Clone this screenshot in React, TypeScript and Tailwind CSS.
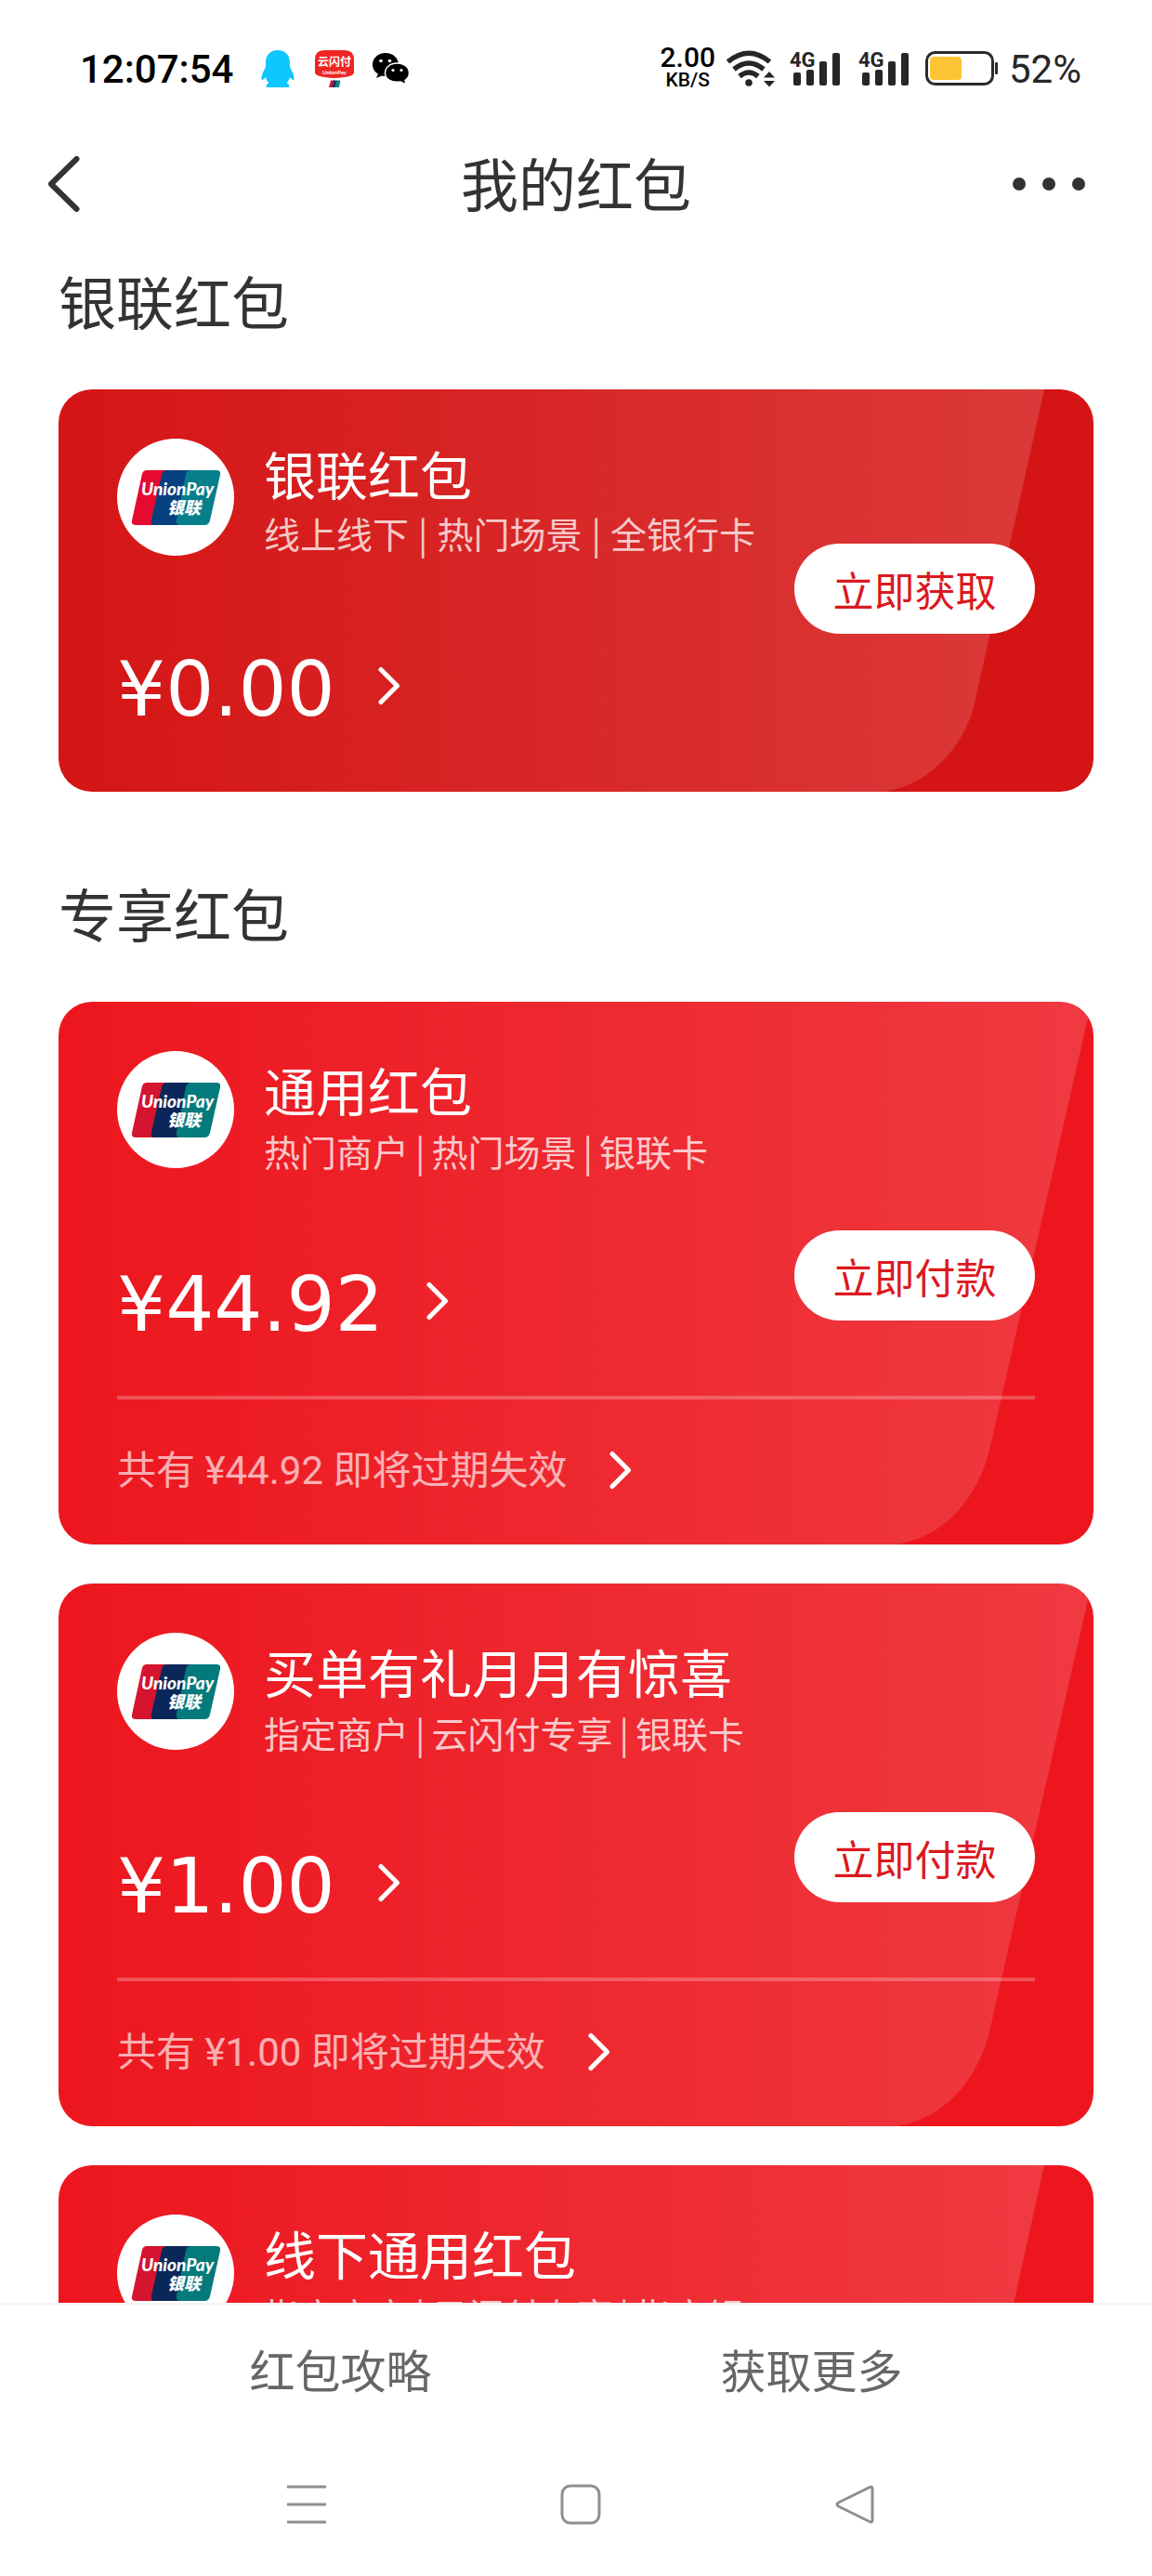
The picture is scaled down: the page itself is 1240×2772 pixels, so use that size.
import React from "react";

type Packet = {
  title: string;
  tags: string[];
  amount: string;
  action: string;
  expiring?: string;
};

const unionPackets: Packet[] = [
  {
    title: "银联红包",
    tags: ["线上线下", "热门场景", "全银行卡"],
    amount: "0.00",
    action: "立即获取",
  },
];

const exclusivePackets: Packet[] = [
  {
    title: "通用红包",
    tags: ["热门商户", "热门场景", "银联卡"],
    amount: "44.92",
    action: "立即付款",
    expiring: "44.92",
  },
  {
    title: "买单有礼月月有惊喜",
    tags: ["指定商户", "云闪付专享", "银联卡"],
    amount: "1.00",
    action: "立即付款",
    expiring: "1.00",
  },
  {
    title: "线下通用红包",
    tags: ["指定商户", "云闪付专享", "指定银"],
    amount: "0.00",
    action: "立即付款",
  },
];

const Chevron: React.FC = () => (
  <svg className="h-[42px] w-6 shrink-0" viewBox="0 0 24 42" fill="none">
    <path
      d="M3 3.5 20.5 21 3 38.5"
      stroke="white"
      strokeWidth="5"
      strokeLinecap="round"
      strokeLinejoin="round"
    />
  </svg>
);

const UnionPayLogo: React.FC<{ dark: boolean }> = ({ dark }) => (
  <svg className="size-[126px] shrink-0" viewBox="0 0 126 126">
    <circle cx="63" cy="63" r="63" fill="white" />
    <path
      d="M32 34H58L46 93H20Q15 93 16 88L27 38Q28 34 32 34Z"
      fill={dark ? "#d5142f" : "#e60a30"}
    />
    <path
      d="M54 34H84L74 93H38Q36 90 37 87L48 39Q49 34 54 34Z"
      fill={dark ? "#0b2759" : "#07407f"}
    />
    <path
      d="M80 34H107Q112 34 111 39L100 88Q99 93 94 93H66Q63 91 64 87L74 39Q75 34 80 34Z"
      fill={dark ? "#037a7c" : "#077f8b"}
    />
    <text
      x="26"
      y="61"
      fill="white"
      fontSize="19"
      fontWeight="900"
      fontStyle="italic"
      fontFamily="Lato, sans-serif"
    >
      UnionPay
    </text>
    <text
      x="54"
      y="81"
      fill="white"
      fontSize="18"
      fontWeight="900"
      fontStyle="italic"
      fontFamily="'Noto Sans CJK SC', sans-serif"
    >
      银联
    </text>
  </svg>
);

// Light sheet that sits behind the card content, stretched with the card
const Sheen: React.FC<{ tall: boolean }> = ({ tall }) => (
  <svg
    className="absolute inset-0 h-full w-full"
    viewBox={tall ? "0 0 1114 584" : "0 0 1114 433"}
    preserveAspectRatio="none"
  >
    <defs>
      <linearGradient id={tall ? "sheen-tall" : "sheen"} x1="0" x2="1" y1="0" y2="0">
        <stop offset="0" stopColor="white" stopOpacity="0" />
        <stop offset="1" stopColor="white" stopOpacity="0.155" />
      </linearGradient>
    </defs>
    {tall ? (
      <path
        d="M0 0H1112L1003 478C990 535 952 577 901 584H0Z"
        fill="url(#sheen-tall)"
      />
    ) : (
      <path
        d="M0 0H1061L985 342C972 388 935 426 889 433H0Z"
        fill="url(#sheen)"
      />
    )}
  </svg>
);

const PacketCard: React.FC<{ packet: Packet; deep?: boolean }> = ({
  packet,
  deep = false,
}) => {
  const { title, tags, amount, action, expiring } = packet;
  return (
    <article
      className={`relative shrink-0 overflow-hidden rounded-[36px] text-white ${
        deep ? "bg-[#d51515]" : "bg-[#ed161e]"
      }`}
    >
      <Sheen tall={Boolean(expiring)} />
      <div className="relative px-[63px]">
        <div className="flex items-end justify-between pt-[53px]">
          <div>
            <div className="flex gap-8">
              <UnionPayLogo dark={!deep} />
              <div className={deep ? "pt-1" : "pt-2"}>
                <h3 className="whitespace-nowrap text-[56px] leading-[66px]">
                  {title}
                </h3>
                <p
                  className={`flex whitespace-nowrap text-[39px] text-white/75 ${
                    deep ? "gap-2.5 leading-[62px]" : "gap-[7px] leading-[66px]"
                  }`}
                >
                  {tags.map((tag, i) => (
                    <React.Fragment key={tag}>
                      {i > 0 && <span>|</span>}
                      <span>{tag}</span>
                    </React.Fragment>
                  ))}
                </p>
              </div>
            </div>
            <a
              href="#detail"
              className={`flex h-20 items-center gap-[46px] ${
                deep ? "mt-[98px]" : "mt-[93px]"
              }`}
            >
              <span className="font-['DejaVu_Sans',sans-serif] text-[82px] leading-[80px]">
                ¥{amount}
              </span>
              <span className="pb-2">
                <Chevron />
              </span>
            </a>
          </div>
          <button
            className={`h-[97px] w-[259px] shrink-0 rounded-full bg-white text-[44px] leading-[60px] text-[#dc1820] ${
              deep ? "mb-[100px]" : "mb-[23px]"
            }`}
          >
            {action}
          </button>
        </div>
        {expiring ? (
          <>
            <hr className="mt-[58px] border-t-4 border-white/25" />
            <a
              href="#expiring"
              className="flex h-[156px] items-center gap-[46px] pb-1 font-['Roboto','Noto_Sans_CJK_SC',sans-serif] text-[42px]"
            >
              <span className="text-white/65">
                共有 ¥{expiring} 即将过期失效
              </span>
              <Chevron />
            </a>
          </>
        ) : (
          <div className="h-[70px]" />
        )}
      </div>
    </article>
  );
};

const SignalIcon: React.FC = () => (
  <svg className="h-14 w-[54px]" viewBox="0 -8 54 56" fill="#262626">
    <text
      x="0"
      y="18"
      fontSize="22"
      fontWeight="700"
      fontFamily="Roboto, sans-serif"
    >
      4G
    </text>
    <rect x="4" y="24" width="8" height="14" rx="2" />
    <rect x="18" y="21" width="8" height="17" rx="2" />
    <rect x="32" y="12" width="8" height="26" rx="2" />
    <rect x="46" y="3" width="8" height="35" rx="2" />
  </svg>
);

const StatusBar: React.FC = () => (
  <div className="flex h-[148px] shrink-0 items-center justify-between pl-[86px] pr-[76px] font-['Roboto',sans-serif]">
    <div className="flex items-center">
      <span className="text-[42px] font-medium text-black">12:07:54</span>
      <svg className="ml-[30px] h-[42px] w-9" viewBox="0 0 36 42" fill="#0fc6ff">
        <path d="M18 1C9.500 1 5 7 5 14V19C3 23 0 28 .5 32 1 34.500 3.500 31.500 5 30 5.500 33 7 35 8.500 36.500 6 37.500 5 39 6 41H30C31 39 30 37.500 27.500 36.500 29 35 30.500 33 31 30 32.500 31.500 35 34.500 35.500 32 36 28 33 23 31 19V14C31 7 26.500 1 18 1Z" />
      </svg>
      <svg className="ml-[22px] h-[42px] w-[42px]" viewBox="0 0 42 42">
        <path
          d="M10 1H32Q42 1 42 11V25Q42 30 21 31 0 30 0 25V11Q0 1 10 1Z"
          fill="#ee2523"
        />
        <text
          x="21"
          y="18"
          textAnchor="middle"
          fill="white"
          fontSize="12"
          fontWeight="700"
          fontFamily="'Noto Sans CJK SC', sans-serif"
        >
          云闪付
        </text>
        <text
          x="21"
          y="27"
          textAnchor="middle"
          fill="white"
          fontSize="6"
          fontWeight="700"
          fontFamily="Lato, sans-serif"
        >
          UnionPay
        </text>
        <path d="M17 33.500H21L19 41H15Z" fill="#c8193c" />
        <path d="M20 33.500H24L22 41H18.500Z" fill="#1b3564" />
        <path d="M23.500 33.500H27.500L26 41H21.500Z" fill="#11868a" />
      </svg>
      <svg className="ml-5 h-9 w-10" viewBox="0 0 40 36">
        <path
          d="M14 1C6 1 0 6.500 0 13.500 0 18 2.500 21.500 6 23.500L4 28 10 25.500C19 28 28 22 28 13.500 28 6.500 22 1 14 1Z"
          fill="black"
        />
        <path
          d="M26.500 12C19 12 13.500 16.500 13.500 22.500 13.500 29 19.500 33.500 30 32L36.500 35 35 30.500C38 28.500 39.500 26 39.500 22.500 39.500 16.500 34 12 26.500 12Z"
          fill="black"
          stroke="white"
          strokeWidth="1.500"
        />
        <g fill="white">
          <circle cx="9" cy="9.500" r="1.800" />
          <circle cx="18.500" cy="9.500" r="1.800" />
          <circle cx="22" cy="19.500" r="1.600" />
          <circle cx="31" cy="19.500" r="1.600" />
        </g>
      </svg>
    </div>
    <div className="flex items-center text-[#262626]">
      <div className="flex flex-col items-center font-medium text-black">
        <span className="text-[30px] leading-6">2.00</span>
        <span className="text-[21px] leading-6">KB/S</span>
      </div>
      <svg className="ml-3 h-10 w-[52px]" viewBox="0 0 52 40" fill="none">
        <g stroke="#262626" strokeWidth="5.500">
          <path d="M1.500 12.500Q24 -6 46.500 12.500" />
          <path d="M8 20.500Q24 7.500 40 20.500" />
          <path d="M14 28Q24 20 34 28" />
        </g>
        <circle cx="24" cy="35" r="3.800" fill="#262626" />
        <path d="M46 23 52 29.500H40ZM46 39.500 52 33H40Z" fill="#262626" />
      </svg>
      <div className="ml-4 flex gap-5">
        <SignalIcon />
        <SignalIcon />
      </div>
      <svg className="ml-[18px] h-[38px] w-[78px]" viewBox="0 0 78 38">
        <rect
          x="1.500"
          y="1.500"
          width="71"
          height="34"
          rx="9"
          fill="white"
          stroke="#2b2b2d"
          strokeWidth="3"
        />
        <rect x="5" y="6" width="34" height="25" rx="4" fill="#fdc435" />
        <rect x="75" y="12" width="3" height="13" rx="1" fill="#2b2b2d" />
      </svg>
      <span className="ml-3 text-[42px]">52%</span>
    </div>
  </div>
);

const App: React.FC = () => {
  return (
    <div className="flex h-screen flex-col overflow-hidden bg-white font-['Noto_Sans_CJK_SC',sans-serif] text-[#333333]">
      <StatusBar />

      <header className="flex h-[100px] shrink-0 items-center justify-between pl-[50px] pr-[72px]">
        <button aria-label="返回" className="w-[100px]">
          <svg className="h-[60px] w-9" viewBox="0 0 36 60" fill="none">
            <path
              d="M32.500 3 5 30 32.500 57"
              stroke="#333333"
              strokeWidth="6"
              strokeLinecap="round"
              strokeLinejoin="round"
            />
          </svg>
        </button>
        <h1 className="pb-1 text-[62px] leading-[84px]">我的红包</h1>
        <button aria-label="更多" className="flex w-[78px] justify-between">
          <span className="size-3.5 rounded-full bg-[#333333]" />
          <span className="size-3.5 rounded-full bg-[#333333]" />
          <span className="size-3.5 rounded-full bg-[#333333]" />
        </button>
      </header>

      <main className="flex min-h-0 flex-1 flex-col gap-[91px] overflow-hidden px-[63px] pt-9">
        <section>
          <h2 className="mb-[57px] text-[62px] leading-[78px]">银联红包</h2>
          {unionPackets.map((packet) => (
            <PacketCard key={packet.title} packet={packet} deep />
          ))}
        </section>
        <section>
          <h2 className="mb-[57px] text-[62px] leading-[78px]">专享红包</h2>
          <div className="flex flex-col gap-[42px]">
            {exclusivePackets.map((packet) => (
              <PacketCard key={packet.title} packet={packet} />
            ))}
          </div>
        </section>
      </main>

      <footer className="shrink-0 border-t-[3px] border-[#f5f5f5] bg-white">
        <nav className="grid h-[140px] grid-cols-2 items-center px-[113px] pb-1 text-center text-[49px] text-[#666666]">
          <a href="#guide">红包攻略</a>
          <a href="#more">获取更多</a>
        </nav>
        <div className="grid h-[151px] grid-cols-3 items-center justify-items-center pb-1 pl-[182px] pr-[172px]">
          <button aria-label="最近任务">
            <svg className="size-11" viewBox="0 0 44 44" stroke="#8f8f8f" strokeWidth="3">
              <path d="M1 3H43M1 22H43M1 41H43" />
            </svg>
          </button>
          <button aria-label="主屏幕">
            <svg className="size-11" viewBox="0 0 44 44" fill="none" stroke="#8f8f8f" strokeWidth="3">
              <rect x="2" y="2" width="40" height="40" rx="9" />
            </svg>
          </button>
          <button aria-label="返回上一页">
            <svg className="size-11" viewBox="0 0 44 44" fill="none" stroke="#8f8f8f" strokeWidth="3">
              <path
                d="M38 3.500 4.500 20Q1.500 22 4.500 24L38 40.500Q41 42 41 39V5Q41 2 38 3.500Z"
                strokeLinejoin="round"
              />
            </svg>
          </button>
        </div>
      </footer>
    </div>
  );
};

export default App;
